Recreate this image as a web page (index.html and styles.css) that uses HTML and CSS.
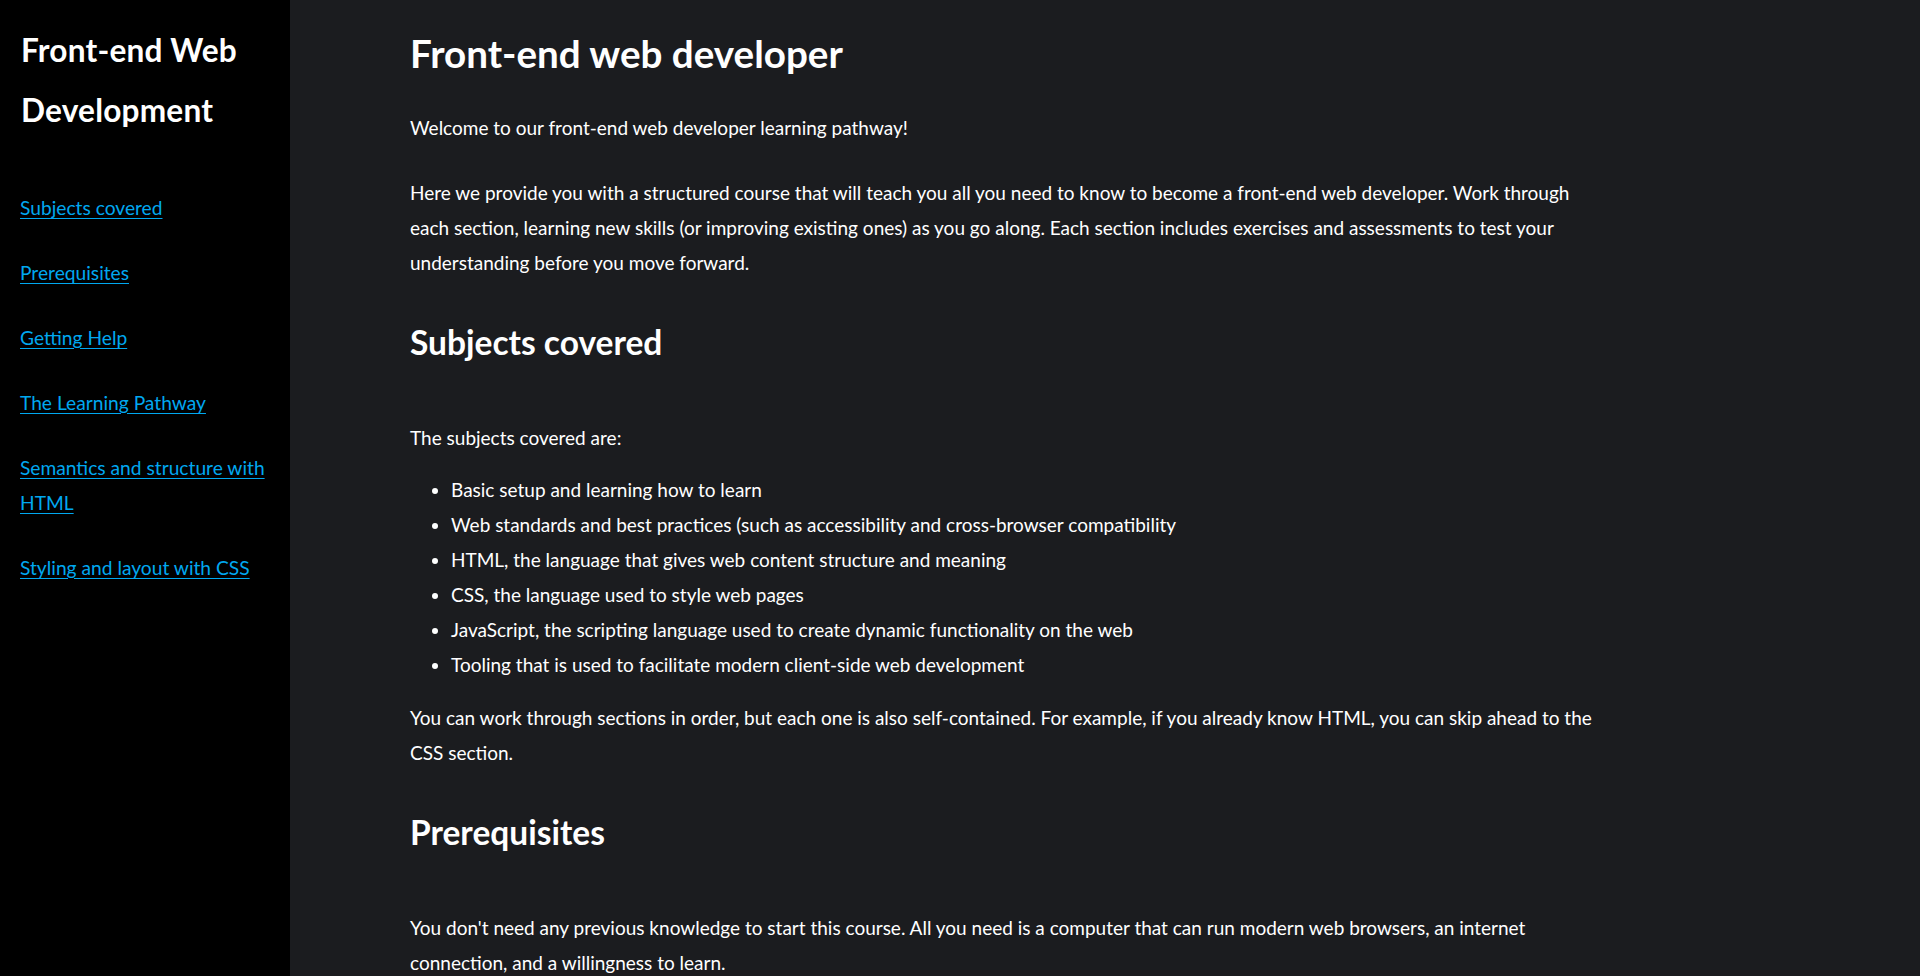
FILE: index.html
```html
<!DOCTYPE html>
<html lang="en">
<head>
<meta charset="utf-8">
<title>Front-end Web Development</title>
<link rel="stylesheet" href="styles.css">
</head>
<body>
<div class="layout">
  <nav class="sidebar">
    <div class="site-title">Front-end Web Development</div>
    <ul class="nav-list">
      <li><a href="#subjects">Subjects covered</a></li>
      <li><a href="#prereq">Prerequisites</a></li>
      <li><a href="#help">Getting Help</a></li>
      <li><a href="#pathway">The Learning Pathway</a></li>
      <li><a href="#html">Semantics and structure with HTML</a></li>
      <li><a href="#css">Styling and layout with CSS</a></li>
    </ul>
  </nav>
  <main class="content">
    <div class="article">
      <h1 class="page-title">Front-end web developer</h1>
      <p class="intro">Welcome to our front-end web developer learning pathway!</p>
      <p class="lead">Here we provide you with a structured course that will teach you all you need to know to become a front-end web developer. Work through each section, learning new skills (or improving existing ones) as you go along. Each section includes exercises and assessments to test your understanding before you move forward.</p>
      <h2 class="section-title" id="subjects">Subjects covered</h2>
      <p class="first">The subjects covered are:</p>
      <ul class="subjects">
        <li>Basic setup and learning how to learn</li>
        <li>Web standards and best practices (such as accessibility and cross-browser compatibility</li>
        <li>HTML, the language that gives web content structure and meaning</li>
        <li>CSS, the language used to style web pages</li>
        <li>JavaScript, the scripting language used to create dynamic functionality on the web</li>
        <li>Tooling that is used to facilitate modern client-side web development</li>
      </ul>
      <p class="after">You can work through sections in order, but each one is also self-contained. For example, if you already know HTML, you can skip ahead to the CSS section.</p>
      <h2 class="section-title" id="prereq">Prerequisites</h2>
      <p class="first">You don't need any previous knowledge to start this course. All you need is a computer that can run modern web browsers, an internet connection, and a willingness to learn.</p>
    </div>
  </main>
</div>
</body>
</html>
```

FILE: styles.css
```css
html, body {
  margin: 0;
  padding: 0;
  height: 100%;
  overflow: hidden;
}

body {
  background: #1b1c1f;
  color: #ffffff;
  font-family: Lato, "Liberation Sans", sans-serif;
}

.layout {
  display: flex;
  height: 100vh;
}

.sidebar {
  flex: 0 0 290px;
  width: 290px;
  background: #000000;
  box-sizing: border-box;
  padding: 20px 20px 0 20px;
}

.site-title {
  font-size: 31.6px;
  font-weight: 700;
  line-height: 60px;
  padding-left: 1px;
  letter-spacing: 0.2px;
}

.nav-list {
  list-style: none;
  margin: 50px 0 0 0;
  padding: 0;
  display: flex;
  flex-direction: column;
  gap: 30px;
}

.nav-list a {
  color: #00a8f0;
  font-size: 19.2px;
  line-height: 35px;
  text-decoration: underline;
  text-underline-offset: 3px;
}

.content {
  flex: 1;
  padding: 0 0 0 120px;
  overflow: hidden;
}

.article {
  max-width: 1200px;
  font-size: 19px;
  line-height: 35px;
}

.page-title {
  font-size: 38.6px;
  font-weight: 700;
  line-height: 60px;
  margin: 23px 0 0 0;
}

.article p {
  margin: 0;
}

.intro {
  margin-top: 27px !important;
}

.lead {
  margin-top: 30px !important;
}

.section-title {
  font-size: 33.5px;
  font-weight: 700;
  line-height: 50px;
  margin: 37px 0 0 0;
}

.first {
  margin-top: 53px !important;
}

.subjects {
  margin: 17px 0 0 0;
  padding: 0 0 0 41px;
}

.after {
  margin-top: 18px !important;
}
```
